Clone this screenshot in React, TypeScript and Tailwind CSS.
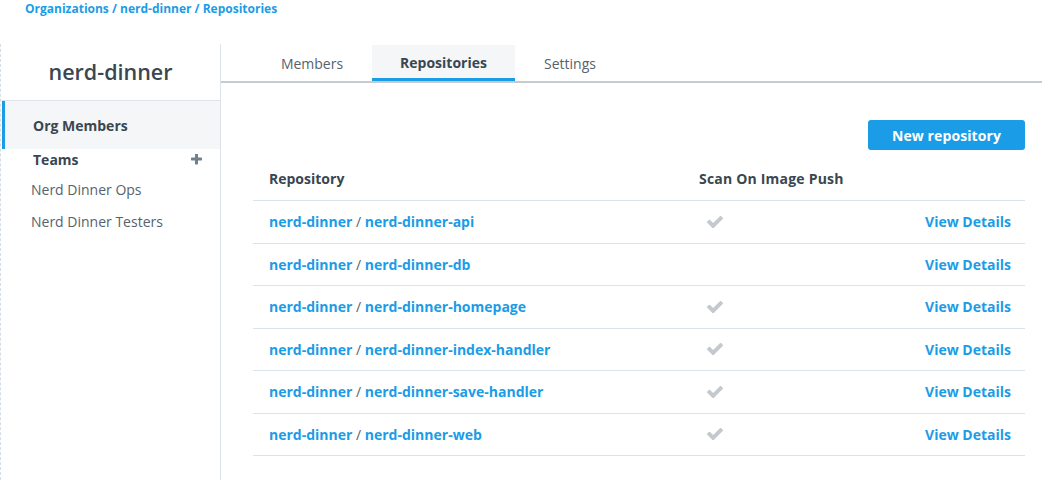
const repos = [
  { name: "nerd-dinner-api", scan: true },
  { name: "nerd-dinner-db", scan: false },
  { name: "nerd-dinner-homepage", scan: true },
  { name: "nerd-dinner-index-handler", scan: true },
  { name: "nerd-dinner-save-handler", scan: true },
  { name: "nerd-dinner-web", scan: true },
];

function CheckIcon() {
  return (
    <svg width="16" height="12" viewBox="121 390 1550 1060" className="fill-[#c3c9cf]">
      <path d="M1671 566q0 40-28 68l-724 724-136 136q-28 28-68 28t-68-28l-136-136-362-362q-28-28-28-68t28-68l136-136q28-28 68-28t68 28l294 295 656-657q28-28 68-28t68 28l136 136q28 28 28 68z" />
    </svg>
  );
}

function PlusIcon() {
  return (
    <svg width="11" height="11" viewBox="192 192 1408 1408" className="fill-[#72818c]">
      <path d="M1600 736v192q0 40-28 68t-68 28h-416v416q0 40-28 68t-68 28h-192q-40 0-68-28t-28-68v-416h-416q-40 0-68-28t-28-68v-192q0-40 28-68t68-28h416v-416q0-40 28-68t68-28h192q40 0 68 28t28 68v416h416q40 0 68 28t28 68z" />
    </svg>
  );
}

export default function App() {
  return (
    <div className="h-screen w-full bg-white font-['Open_Sans',sans-serif] text-[14px] text-[#3f4b56] flex flex-col">
      <div className="h-[44px] shrink-0 pl-[25px] pt-[1px] text-[12px] leading-[16px] font-bold text-[#1b9ce6]">
        Organizations / nerd-dinner / Repositories
      </div>

      <div className="flex flex-1">
        {/* sidebar */}
        <aside className="w-[221px] shrink-0 border-r border-[#dde3e8]">
          <div className="border-l border-dashed border-[#d5dde5] h-full">
            <div className="h-[57px] flex items-center justify-center border-b border-[#dde3e8] text-[21.5px] font-semibold text-[#3a4752]">
              nerd-dinner
            </div>
            <div className="h-[48px] flex items-center bg-[#f4f6f8] border-l-[3px] border-[#1b9ce6] ml-[1px] pl-[28px] font-bold text-[#3a4650]">
              Org Members
            </div>
            <div className="h-[20px] flex items-center justify-between pl-[32px] pr-[18px] font-bold text-[#3a4650]">
              <span>Teams</span>
              <PlusIcon />
            </div>
            <div className="mt-[4px] h-[32px] flex items-center pl-[30px] text-[#56626c]">Nerd Dinner Ops</div>
            <div className="h-[32px] flex items-center pl-[30px] text-[#56626c]">Nerd Dinner Testers</div>
          </div>
        </aside>

        {/* main */}
        <main className="flex-1 flex flex-col">
          <nav className="flex border-b-2 border-[#c6cbd0] pl-[31px] pt-[1px]">
            <div className="h-[36px] w-[120px] flex items-center justify-center text-[#56626c]">Members</div>
            <div className="h-[36px] w-[143px] flex items-center justify-center font-bold text-[#3a4650] bg-[#f4f6f8] border-b-[3px] border-[#1b9ce6] -mb-[2px] pt-[2px]">
              Repositories
            </div>
            <div className="h-[36px] w-[110px] flex items-center justify-center text-[#56626c]">Settings</div>
          </nav>

          <div className="pl-[32px] pr-[17px]">
            <div className="flex justify-end mt-[37px]">
              <button className="h-[30px] w-[157px] rounded-[3px] bg-[#1b9ce6] text-white font-bold tracking-[0.1px]">
                New repository
              </button>
            </div>

            <div className="mt-[6px] h-[45px] flex items-center border-b border-[#dde3ea] font-bold text-[#3a4650]">
              <div className="w-[430px] pl-[16px]">Repository</div>
              <div className="pl-[16px] tracking-[0.2px]">Scan On Image Push</div>
            </div>

            {repos.map((r) => (
              <div key={r.name} className="h-[42.5px] flex items-center border-b border-[#dde3ea]">
                <div className="w-[430px] pl-[16px]">
                  <span className="font-bold text-[#1b9ce6]">nerd-dinner</span>
                  <span className="text-[#56626c]"> / </span>
                  <span className="font-bold text-[#1b9ce6]">{r.name}</span>
                </div>
                <div className="w-[200px] pl-[24px] flex items-center">
                  {r.scan && <CheckIcon />}
                </div>
                <div className="flex-1 text-right pr-[14px] font-bold text-[#1b9ce6]">View Details</div>
              </div>
            ))}
          </div>
        </main>
      </div>
    </div>
  );
}
